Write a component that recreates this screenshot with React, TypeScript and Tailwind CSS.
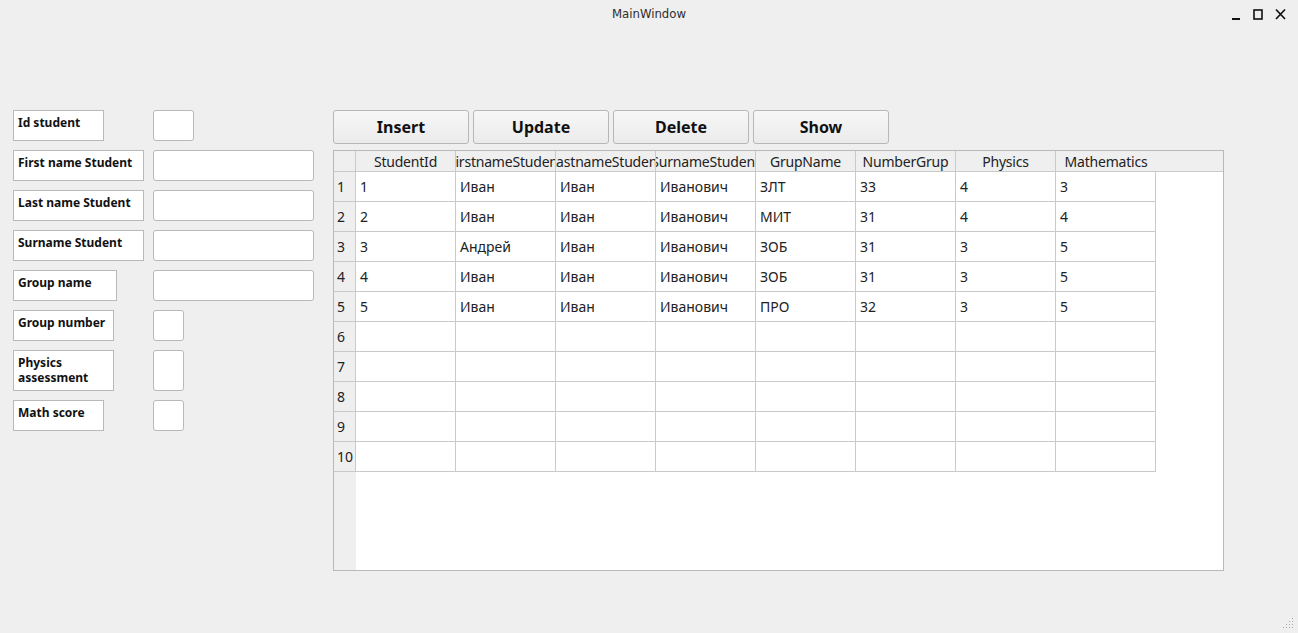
import React from "react"

const labels = [
  { text: "Id student", lw: "w-[91px]", iw: "w-[41px]", h: "h-[31px]" },
  { text: "First name Student", lw: "w-[131px]", iw: "w-[161px]", h: "h-[31px]" },
  { text: "Last name Student", lw: "w-[131px]", iw: "w-[161px]", h: "h-[31px]" },
  { text: "Surname Student", lw: "w-[131px]", iw: "w-[161px]", h: "h-[31px]" },
  { text: "Group name", lw: "w-[104px]", iw: "w-[161px]", h: "h-[31px]" },
  { text: "Group number", lw: "w-[101px]", iw: "w-[31px]", h: "h-[31px]" },
  { text: "Physics assessment", lw: "w-[101px]", iw: "w-[31px]", h: "h-[41px]" },
  { text: "Math score", lw: "w-[91px]", iw: "w-[31px]", h: "h-[31px]" },
]

const headers = ["StudentId", "FirstnameStudent", "LastnameStudent", "SurnameStudent", "GrupName", "NumberGrup", "Physics", "Mathematics"]

const rows = [
  ["1", "Иван", "Иван", "Иванович", "ЗЛТ", "33", "4", "3"],
  ["2", "Иван", "Иван", "Иванович", "МИТ", "31", "4", "4"],
  ["3", "Андрей", "Иван", "Иванович", "ЗОБ", "31", "3", "5"],
  ["4", "Иван", "Иван", "Иванович", "ЗОБ", "31", "3", "5"],
  ["5", "Иван", "Иван", "Иванович", "ПРО", "32", "3", "5"],
  ["", "", "", "", "", "", "", ""],
  ["", "", "", "", "", "", "", ""],
  ["", "", "", "", "", "", "", ""],
  ["", "", "", "", "", "", "", ""],
  ["", "", "", "", "", "", "", ""],
]

const TitleBar = () => (
  <div className="relative h-[28px] flex items-center justify-center">
    <span className="text-[13px] text-[#2e2e2e] font-['DejaVu_Sans_Condensed','DejaVu_Sans',sans-serif]">MainWindow</span>
    <div className="absolute right-[12px] top-[8px] flex items-center gap-[12px]">
      {/* minimize */}
      <svg width="10" height="12" viewBox="0 0 10 12">
        <rect x="1" y="10" width="8" height="2" fill="#111" />
      </svg>
      {/* maximize */}
      <svg width="10" height="12" viewBox="0 0 10 12">
        <rect x="1" y="2" width="8" height="9" fill="none" stroke="#111" strokeWidth="1.6" />
      </svg>
      {/* close */}
      <svg width="11" height="12" viewBox="0 0 11 12">
        <path d="M1 1.5 L10 11 M10 1.5 L1 11" stroke="#111" strokeWidth="1.7" />
      </svg>
    </div>
  </div>
)

const Form = () => (
  <div className="w-[320px] flex flex-col gap-[9px]">
    {labels.map((l) => (
      <div key={l.text} className="flex">
        <div className="w-[140px]">
          <div className={`${l.lw} ${l.h} bg-white border border-[#b9b9b9] px-[4px] pt-[4px] text-[12px] leading-[15px] font-bold text-[#111]`}>
            {l.text}
          </div>
        </div>
        <div className={`${l.iw} ${l.h} bg-white border border-[#b9b9b9] rounded-[3px]`} />
      </div>
    ))}
  </div>
)

const Buttons = () => (
  <div className="flex gap-[4px]">
    {["Insert", "Update", "Delete", "Show"].map((b) => (
      <button
        key={b}
        className="w-[136px] h-[34px] rounded-[3px] border border-[#b7b7b7] bg-gradient-to-b from-[#f7f7f7] to-[#ebebeb] text-[16px] font-bold text-[#111] flex items-center justify-center"
      >
        {b}
      </button>
    ))}
  </div>
)

const Table = () => (
  <div className="mt-[6px] w-[891px] h-[421px] border border-[#b9b9b9] bg-white flex flex-col overflow-hidden">
    {/* header */}
    <div className="flex h-[21px] bg-[#efefef] border-b border-[#c9c9c9] shrink-0">
      <div className="w-[22px] h-full border-r border-[#c9c9c9]" />
      {headers.map((h, i) => (
        <div
          key={h}
          className={`w-[100px] h-full flex items-center justify-center overflow-hidden whitespace-nowrap text-[14px] tracking-[-0.2px] text-[#222] ${i < headers.length - 1 ? "border-r border-[#c9c9c9]" : ""}`}
        >
          <span>{h}</span>
        </div>
      ))}
    </div>
    {/* body */}
    <div className="flex flex-1">
      <div className="w-[22px] bg-[#efefef] flex flex-col">
        {rows.map((_, i) => (
          <div key={i} className="h-[30px] border-b border-r border-[#c9c9c9] pl-[3px] flex items-center text-[14px] text-[#222]">
            {i + 1}
          </div>
        ))}
      </div>
      <div className="flex flex-col">
        {rows.map((r, i) => (
          <div key={i} className="flex h-[30px]">
            {r.map((c, j) => (
              <div key={j} className="w-[100px] h-full border-r border-b border-[#c9c9c9] pl-[4px] flex items-center text-[14px] text-[#222] whitespace-nowrap overflow-hidden">
                {c}
              </div>
            ))}
          </div>
        ))}
      </div>
    </div>
  </div>
)

const Grip = () => (
  <svg className="absolute right-[4px] bottom-[4px]" width="12" height="12" viewBox="0 0 12 12">
    {[
      [10, 1], [10, 4], [7, 4], [10, 7], [7, 7], [4, 7], [10, 10], [7, 10], [4, 10], [1, 10],
    ].map(([x, y], i) => (
      <rect key={i} x={x} y={y} width="1" height="1" fill="#a8a8a8" />
    ))}
  </svg>
)

export default function App() {
  return (
    <div className="relative w-[1298px] h-[633px] bg-[#efefef] overflow-hidden font-['Noto_Sans',sans-serif]">
      <TitleBar />
      <div className="flex pt-[82px] pl-[13px]">
        <Form />
        <div className="flex flex-col">
          <Buttons />
          <Table />
        </div>
      </div>
      <Grip />
    </div>
  )
}
